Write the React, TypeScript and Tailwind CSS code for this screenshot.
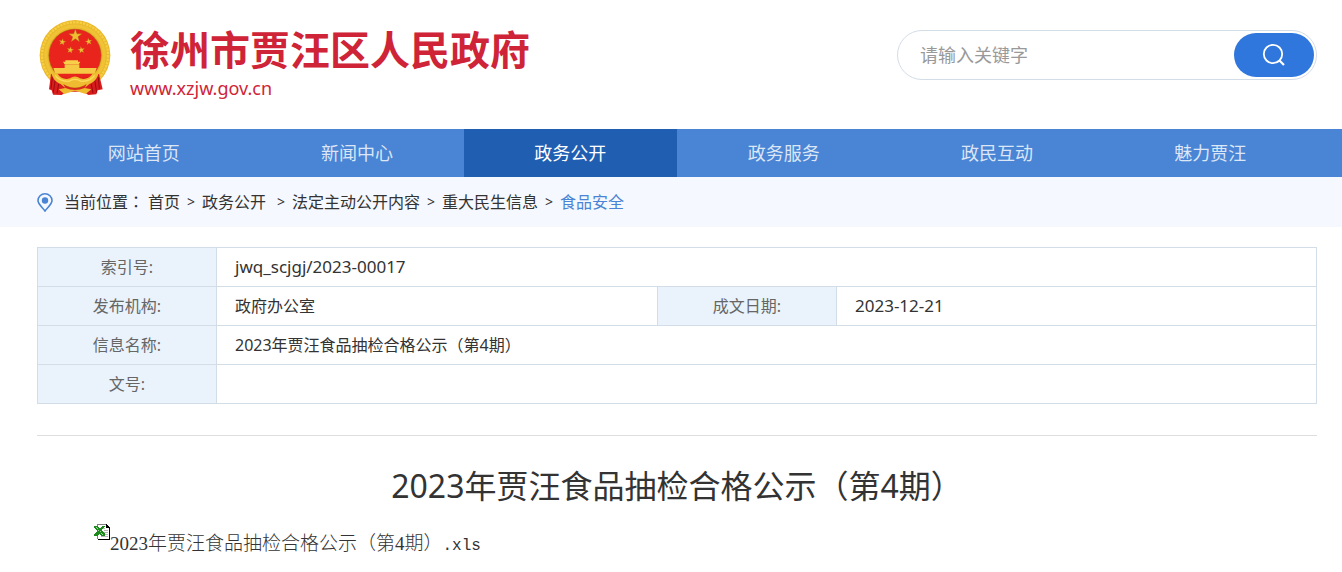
import { useState } from "react";
import type { FormEvent } from "react";

type NavItem = { label: string; href: string; active?: boolean };

const navItems: NavItem[] = [
  { label: "网站首页", href: "#home" },
  { label: "新闻中心", href: "#news" },
  { label: "政务公开", href: "#open", active: true },
  { label: "政务服务", href: "#service" },
  { label: "政民互动", href: "#interact" },
  { label: "魅力贾汪", href: "#charm" },
];

const crumbs = ["首页", "政务公开", "法定主动公开内容", "重大民生信息", "食品安全"];

const noticeTitle = "2023年贾汪食品抽检合格公示（第4期）";

const STAR =
  "M0 -10 L2.3 -3.2 L9.5 -3.1 L3.8 1.2 L5.9 8.1 L0 4 L-5.9 8.1 L-3.8 1.2 L-9.5 -3.1 L-2.3 -3.2 Z";

// 国徽
function Emblem() {
  return (
    <svg viewBox="27 25 216 231" className="w-[72px] h-[77px] shrink-0" aria-hidden="true">
      <circle cx="135" cy="134" r="106" fill="#eab82c" />
      <circle cx="135" cy="134" r="99" fill="none" stroke="#f6cf42" strokeWidth="7" strokeDasharray="7 3" />
      <circle cx="135" cy="134" r="88" fill="none" stroke="#f0c336" strokeWidth="9" />
      <circle cx="135" cy="134" r="80" fill="#b8861c" />
      <circle cx="135" cy="134" r="78" fill="#e8241d" />
      <g fill="#f2bd33" stroke="#a8641a" strokeWidth="0.6">
        <path d={STAR} transform="translate(136 76) scale(2.1)" />
        <path d={STAR} transform="translate(97 94) rotate(10) scale(1.1)" />
        <path d={STAR} transform="translate(176 93) rotate(-10) scale(1.1)" />
        <path d={STAR} transform="translate(121 118) rotate(10) scale(1.1)" />
        <path d={STAR} transform="translate(154 118) rotate(-10) scale(1.1)" />
      </g>
      {/* 天安门 */}
      <path d="M106 149h38v4h7l-4 7h-44l-4-7h7z" fill="#f7cf48" />
      <path d="M104 161h44v11h52l-6 17H76l-6-17h34z" fill="#f5c943" />
      {/* 红绸 */}
      <path
        d="M63 190c10-1 20 3 28 8l44 6 44-6c8-5 18-9 28-8l11 46-15 3-4 12-24 2-14-10h-52l-14 10-26-1-4-13-8-3z"
        fill="#d91d1d"
      />
      <path
        d="M67 200l-4 34M76 206l-6 40M86 220l-5 28M205 200l3 34M194 206l6 40M184 220l5 28"
        fill="none"
        stroke="#9c0a10"
        strokeWidth="3"
      />
      {/* 金色绶带与齿轮 */}
      <path
        d="M64 186l18 2c6 11 16 17 28 17l10-2q15-11 30 0l10 2c12 0 22-6 28-17l18-2c-4 18-14 28-28 34l-14 12 20 4-17 14-32-10-32 10-17-14 20-4-14-12c-14-6-24-16-28-34z"
        fill="#efbb30"
      />
      <path
        d="M76 194c8 12 22 18 40 18q19-12 38 0c18 0 32-6 40-18"
        fill="none"
        stroke="#fadb5c"
        strokeWidth="4"
      />
      <path d="M108 226q27 12 54 0" fill="none" stroke="#c98f1e" strokeWidth="3" />
      <path d="M100 220q35 24 70 0l-6 12q-29 12-58 0z" fill="#d62a1c" />
    </svg>
  );
}

function PinIcon() {
  return (
    <svg viewBox="0 0 16 19" className="w-4 h-[19px] shrink-0" aria-hidden="true">
      <path
        d="M8 18C5.5 14.5 1 11.400 1 7.600A7 6.800 0 0 1 15 7.600C15 11.400 10.500 14.500 8 18Z"
        fill="none"
        stroke="#4a84d4"
        strokeWidth="1.6"
      />
      <circle cx="8" cy="7.500" r="3.200" fill="#4a84d4" />
    </svg>
  );
}

function SearchIcon() {
  return (
    <svg viewBox="0 0 24 24" className="w-6 h-6" fill="none" stroke="#fff" strokeWidth="1.8" aria-hidden="true">
      <circle cx="11" cy="11" r="9.200" />
      <path d="M17.500 17.500L22 22" strokeWidth="2.200" />
    </svg>
  );
}

function XlsIcon() {
  return (
    <svg viewBox="0 0 16 16" className="w-4 h-4 shrink-0" shapeRendering="crispEdges" aria-hidden="true">
      <path d="M3 0h10v3h3v13H3z" fill="#fff" />
      <path d="M3 0h10v1H4v14H3z" fill="#808080" />
      <path d="M12 0h1v1h1v1h1v1h1v13H4v-1h11V4h-3z" fill="#000" />
      <path d="M9 4h2v1H9zM10 6h4v1h-4zM10 8h4v1h-4zM10 10h4v1h-4zM7 12h7v1H7z" fill="#b5b5b5" />
      <path d="M0 2h4v1h1v1h2V3h1V2h3v1h-1v1H9v1H8v2h1v1h1v1h1v3H7v-1H6v-1H5v1H4v1H0v-2h1V9h1V8h1V6H2V5H1V4H0z" fill="#1c8a1c" />
      <path d="M2 3h1v1H2zM3 4h1v1H3zM4 6h1v1H4zM6 7h1v1H6zM7 9h1v1H7zM8 10h1v1H8z" fill="#9fd69f" />
    </svg>
  );
}

const thClass = "border border-[#d3dde8] bg-[#eaf3fc] font-normal text-[#666] text-center";
const tdClass = "border border-[#d3dde8] pl-[18px] text-[#333]";

export default function App() {
  const [keyword, setKeyword] = useState("");

  const handleSearch = (e: FormEvent) => {
    e.preventDefault();
  };

  return (
    <div className="bg-white text-base leading-6 text-[#333] font-['Noto_Sans','Noto_Sans_CJK_SC',sans-serif]">
      <header className="flex items-start justify-between h-[129px] pl-[39px] pr-[25px]">
        <div className="flex items-start pt-[19px]">
          <Emblem />
          <div className="ml-[19px] text-[#cf2437]">
            <h1 className="mt-2 text-[40px] leading-[48px] font-bold whitespace-nowrap font-['Liberation_Sans','Noto_Sans_CJK_SC',sans-serif]">
              徐州市贾汪区人民政府
            </h1>
            <p className="mt-px text-lg leading-6">www.xzjw.gov.cn</p>
          </div>
        </div>
        <form
          onSubmit={handleSearch}
          className="mt-[30px] flex items-center w-[420px] h-[50px] pl-[22px] pr-0.5 border border-[#d3dde8] rounded-full"
        >
          <input
            type="text"
            aria-label="请输入关键字"
            placeholder="请输入关键字"
            value={keyword}
            onChange={(e) => setKeyword(e.target.value)}
            className="flex-1 min-w-0 text-lg outline-none placeholder:text-[#999]"
          />
          <button
            type="submit"
            aria-label="搜索"
            className="flex items-center justify-center w-20 h-11 rounded-full bg-[#2f77dc] cursor-pointer"
          >
            <SearchIcon />
          </button>
        </form>
      </header>

      <nav className="bg-[#4a84d4] pl-[37px] pr-[25px]">
        <ul className="grid grid-cols-6">
          {navItems.map((item) => (
            <li key={item.label}>
              <a
                href={item.href}
                className={`block text-center text-lg leading-[48px] ${
                  item.active ? "bg-[#205eb2] text-white" : "text-[#dbe6f6]"
                }`}
              >
                {item.label}
              </a>
            </li>
          ))}
        </ul>
      </nav>

      <div className="flex items-center h-[50px] bg-[#f5f8fe] pl-[37px] pr-[25px]">
        <PinIcon />
        {/* 冒号用居中的字形 */}
        <span className="ml-[11px] mr-1">
          当前位置<span className="leading-none font-['Noto_Sans_CJK_TC',sans-serif]">：</span>
        </span>
        <ol className="flex">
          {crumbs.map((crumb, i) => (
            <li key={crumb} className="flex">
              {i > 0 && (
                <span className={`w-[22px] text-center text-sm leading-6 ${i === 2 ? "ml-1" : ""}`}>&gt;</span>
              )}
              <a href="#crumb" className={i === crumbs.length - 1 ? "text-[#4a84d4]" : ""}>
                {crumb}
              </a>
            </li>
          ))}
        </ol>
      </div>

      <main className="pt-5 pl-[37px] pr-[25px]">
        <table className="w-full table-fixed border-collapse">
          <colgroup>
            <col className="w-[179px]" />
            <col />
            <col className="w-[179px]" />
            <col className="w-[480px]" />
          </colgroup>
          <tbody>
            <tr className="h-[39px]">
              <th scope="row" className={thClass}>索引号:</th>
              <td colSpan={3} className={`${tdClass} text-[17px]`}>jwq_scjgj/2023-00017</td>
            </tr>
            <tr className="h-[39px]">
              <th scope="row" className={thClass}>发布机构:</th>
              <td className={tdClass}>政府办公室</td>
              <th scope="row" className={thClass}>成文日期:</th>
              <td className={`${tdClass} text-[17px]`}>2023-12-21</td>
            </tr>
            <tr className="h-[39px]">
              <th scope="row" className={thClass}>信息名称:</th>
              <td colSpan={3} className={tdClass}>{noticeTitle}</td>
            </tr>
            <tr className="h-[39px]">
              <th scope="row" className={thClass}>文号:</th>
              <td colSpan={3} className={tdClass}></td>
            </tr>
          </tbody>
        </table>

        <article className="mt-[31px] pt-[26px] border-t border-[#dddddd]">
          <h2 className="text-center text-[32px] leading-[48px]">{noticeTitle}</h2>
          <div className="mt-3.5 pl-[57px] flex items-start">
            <XlsIcon />
            <a
              href="#attachment"
              className="mt-2 text-[19px] leading-6 font-light font-['Liberation_Serif','Noto_Sans_CJK_SC',serif]"
            >
              {noticeTitle}
              <span className="text-base leading-6 font-['Liberation_Mono',monospace]">.xls</span>
            </a>
          </div>
        </article>
      </main>
    </div>
  );
}
